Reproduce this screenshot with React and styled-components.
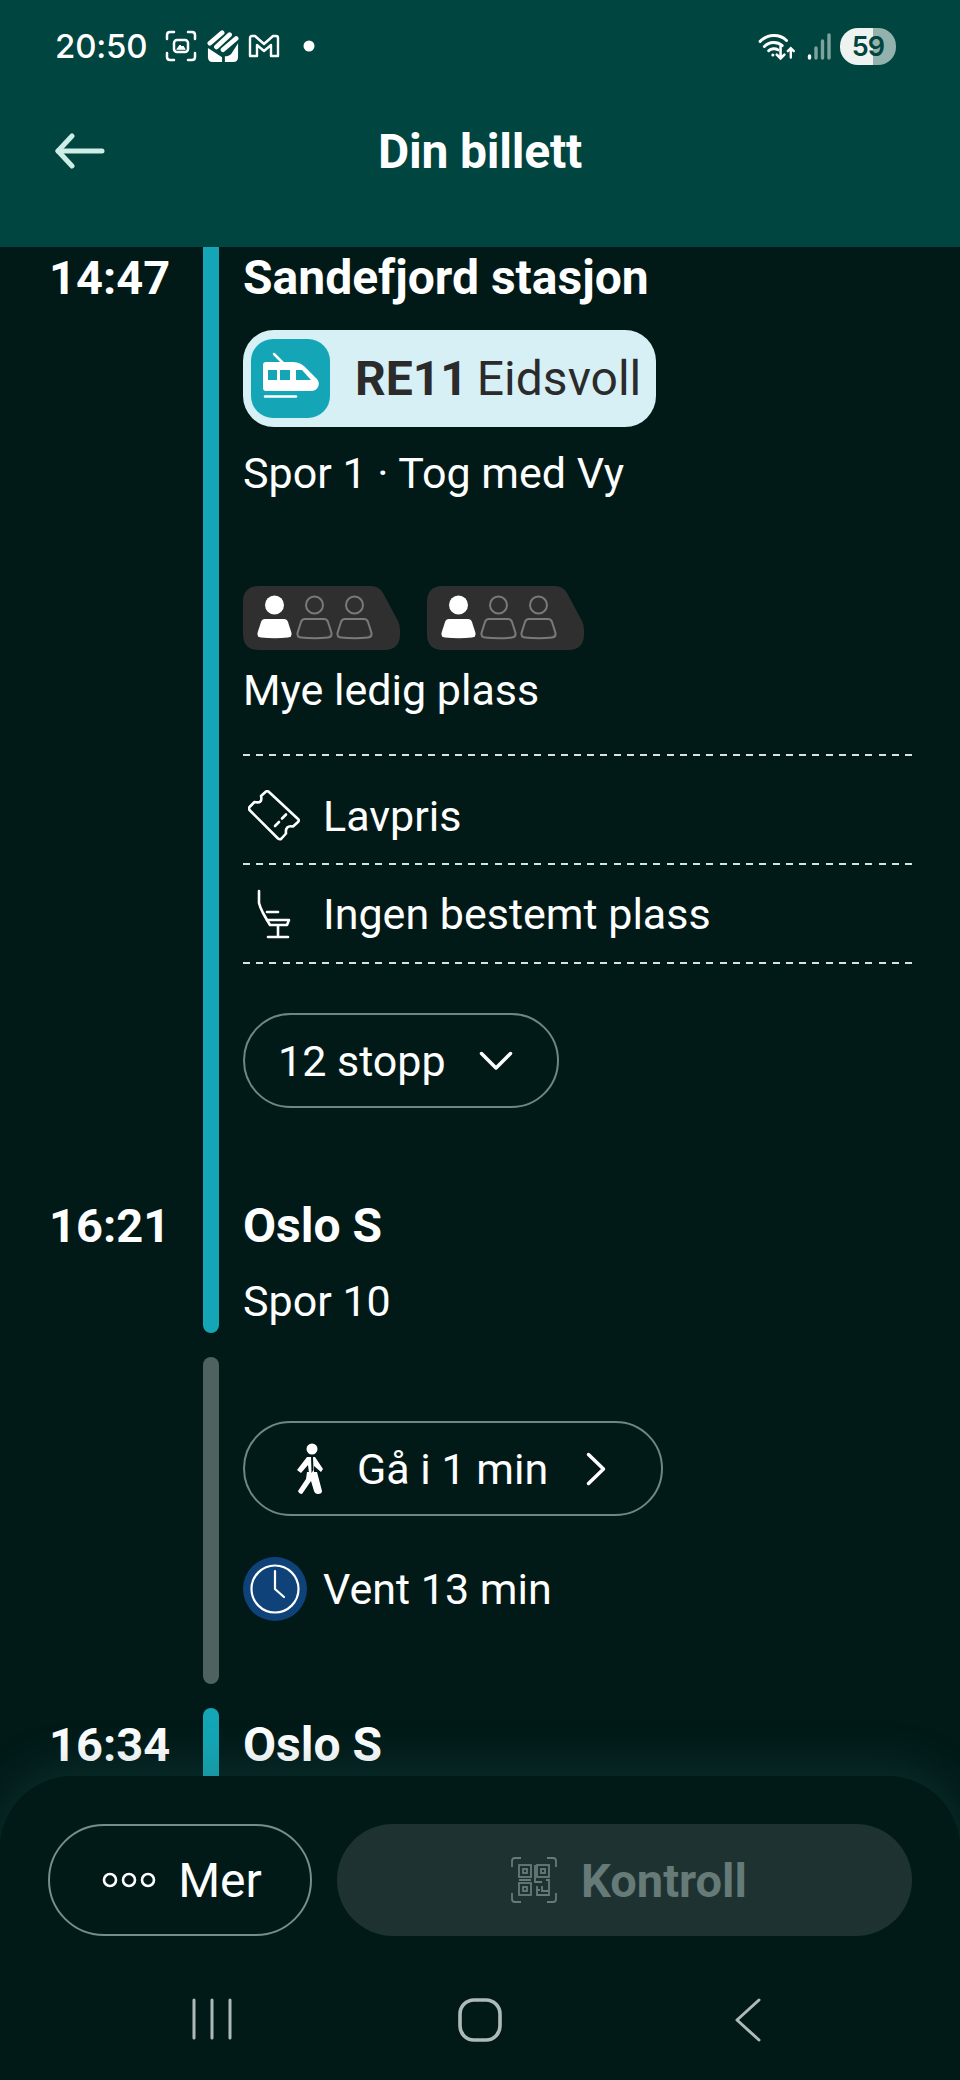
import React from "react";
import styled, { createGlobalStyle } from "styled-components";

const Global = createGlobalStyle`
  html, body { margin: 0; padding: 0; background: #011a18; }
  * { box-sizing: border-box; }
`;

const Screen = styled.div`
  position: relative;
  width: 960px;
  height: 2080px;
  overflow: hidden;
  display: flex;
  flex-direction: column;
  background: #011a18;
  color: #fff;
  font-family: Roboto, "Liberation Sans", sans-serif;
`;

const Header = styled.header`
  flex: none;
  height: 247px;
  background: #00453f;
  padding: 0 55px;
  display: flex;
  flex-direction: column;
`;

const StatusBar = styled.div`
  height: 92px;
  display: flex;
  align-items: center;
  justify-content: space-between;
`;

const StatusLeft = styled.div`
  display: flex;
  align-items: center;
`;

const Clock = styled.span`
  font-family: Inter, Roboto, sans-serif;
  font-size: 33px;
  font-weight: 500;
  letter-spacing: -0.2px;
`;

const StatusIcon = styled.span`
  display: flex;
  margin-left: ${(p) => p.$left}px;
`;

const StatusRight = styled.div`
  display: flex;
  align-items: center;
  gap: 9px;
  margin-right: 9px;
`;

const Battery = styled.div`
  width: 56px;
  height: 37px;
  border-radius: 18px;
  background: linear-gradient(90deg, #eef3f2 0 59%, #93b2ad 59% 100%);
  color: #02443e;
  font-family: Inter, Roboto, sans-serif;
  font-size: 27px;
  font-weight: 600;
  letter-spacing: -1px;
  display: flex;
  align-items: center;
  justify-content: center;
`;

const TitleBar = styled.div`
  height: 118px;
  display: grid;
  grid-template-columns: 50px 1fr 50px;
  align-items: center;
`;

const Title = styled.h1`
  margin: 0;
  font-size: 48px;
  font-weight: 700;
  letter-spacing: -0.2px;
  text-align: center;
`;

const Timeline = styled.main`
  flex: 1;
  min-height: 0;
  overflow: hidden;
  padding-left: 49px;
  display: flex;
  flex-direction: column;
  gap: 24px;
`;

const Leg = styled.section`
  display: grid;
  grid-template-columns: 154px 16px 1fr;
`;

const Times = styled.div`
  display: flex;
  flex-direction: column;
  justify-content: space-between;
  padding-bottom: ${(p) => p.$bottom || 0}px;
`;

const Time = styled.div`
  font-size: 47px;
  font-weight: 700;
  line-height: 60px;
  margin-top: ${(p) => p.$top || 0}px;
`;

const Bar = styled.div`
  border-radius: ${(p) => p.$radius};
  background: ${(p) => p.$color};
`;

const Body = styled.div`
  padding-left: 24px;
  padding-right: 48px;
  display: flex;
  flex-direction: column;
`;

const Place = styled.div`
  font-size: 48px;
  font-weight: 700;
  line-height: 60px;
  margin-top: ${(p) => p.$top || 0}px;
`;

const Line = styled.div`
  font-size: 43px;
  line-height: 56px;
  margin-top: ${(p) => p.$top || 0}px;
  margin-bottom: ${(p) => p.$bottom || 0}px;
`;

const Chip = styled.div`
  align-self: flex-start;
  margin-top: 22px;
  height: 97px;
  width: 413px;
  padding-left: 8px;
  border-radius: 31px;
  background: #d7f0f5;
  color: #2b2b2c;
  display: flex;
  align-items: center;
  font-size: 48px;
`;

const ChipIcon = styled.div`
  width: 79px;
  height: 79px;
  border-radius: 22px;
  background: #14a6b6;
  margin-right: 25px;
  flex: none;
`;

const ChipCode = styled.b`
  font-weight: 700;
  margin-right: 9px;
`;

const Badges = styled.div`
  margin-top: 85px;
  display: flex;
  gap: 27px;
  height: 65px;
`;

const Dashed = styled.div`
  height: 2px;
  margin-top: ${(p) => p.$top || 0}px;
  background: repeating-linear-gradient(90deg, #d8e2e0 0 7px, transparent 7px 13.24px);
`;

const InfoRow = styled.div`
  height: ${(p) => p.$height}px;
  padding-top: ${(p) => p.$pad || 0}px;
  display: flex;
  align-items: center;
  gap: 18px;
  font-size: 43px;
`;

const InfoIcon = styled.div`
  width: 62px;
  flex: none;
  display: flex;
  justify-content: center;
`;

const Pill = styled.div`
  align-self: flex-start;
  height: 95px;
  width: ${(p) => p.$width}px;
  margin-top: ${(p) => p.$top || 0}px;
  border: 2px solid #6f8784;
  border-radius: 48px;
  display: flex;
  align-items: center;
  padding-left: ${(p) => p.$left}px;
  gap: ${(p) => p.$gap}px;
  font-size: 43px;

  svg:last-child {
    margin-left: ${(p) => p.$tail || 0}px;
  }
`;

const WaitRow = styled.div`
  margin-top: 41px;
  display: flex;
  align-items: center;
  gap: 16px;
  font-size: 43px;
`;

const Spacer = styled.div`
  height: ${(p) => p.$height}px;
`;

const Sheet = styled.footer`
  position: absolute;
  left: 0;
  right: 0;
  bottom: 0;
  height: 304px;
  background: #011a18;
  border-radius: 72px 72px 0 0;
  box-shadow: 0 -8px 46px rgba(40, 100, 94, 0.3);
  padding: 48px 48px 0;
`;

const Actions = styled.div`
  display: flex;
  gap: 25px;
  height: 112px;
`;

const MoreButton = styled.div`
  width: 264px;
  padding-left: 4px;
  border: 2px solid #778d8a;
  border-radius: 56px;
  display: flex;
  align-items: center;
  justify-content: center;
  gap: 22px;
  font-size: 48px;
`;

const ControlButton = styled.div`
  flex: 1;
  background: #1e3331;
  border-radius: 56px;
  padding-left: 8px;
  display: flex;
  align-items: center;
  justify-content: center;
  gap: 23px;
  font-size: 47px;
  font-weight: 700;
  color: #667a78;
`;

const NavBar = styled.nav`
  margin-top: 62px;
  height: 44px;
  display: grid;
  grid-template-columns: repeat(3, 268px);
  padding-left: 30px;
`;

const NavSlot = styled.div`
  display: flex;
  justify-content: center;
`;

const WifiIcon = () => (
  <svg width="40" height="29" viewBox="0 0 46 34" fill="none" stroke="#fff" strokeWidth="3.4" strokeLinecap="round">
    <path d="M2 11C11 2 25 2 33 10" />
    <path d="M7 17C13 11 22 11 28 16" />
    <path d="M12 22C15 19 20 19 23 21" />
    <circle cx="17" cy="27" r="1.8" fill="#fff" stroke="none" />
    <path d="M26 17V31M21.5 26.5L26 31L30.5 26.5" strokeWidth="3" />
    <path d="M38 30V19M34.5 22.5L38 19L41.5 22.5" strokeWidth="2.800" />
  </svg>
);

const SignalIcon = () => (
  <svg width="24" height="27" viewBox="0 0 24 27" fill="none" strokeLinecap="round" strokeWidth="3.4">
    <path d="M2.500 23V25" stroke="#fff" />
    <path d="M9 15V25M15.500 8V25M22 2V25" stroke="#7ea39e" />
  </svg>
);

const ScanIcon = () => (
  <svg width="32" height="32" viewBox="0 0 32 32" fill="none" stroke="#fff" strokeWidth="2.500" strokeLinecap="round">
    <path d="M9 2H5Q2 2 2 5V9M23 2H27Q30 2 30 5V9M2 23V27Q2 30 5 30H9M30 23V27Q30 30 27 30H23" />
    <rect x="9" y="10" width="14" height="12" rx="3" />
    <path d="M12 19L15 15L17 17L18 16L20 19Z" fill="#fff" strokeWidth="1" />
  </svg>
);

const WalletIcon = () => (
  <svg width="32" height="32" viewBox="0 0 34 34" fill="#fff">
    <path d="M3 14L16 3M10 18L24 5M17 21L31 9" stroke="#fff" strokeWidth="5" strokeLinecap="round" />
    <path d="M1 19L16 29V34H6Q1 34 1 29Z" />
    <path d="M33 14V29Q33 34 28 34H19V28Q24 28 26 25Z" />
  </svg>
);

const MailIcon = () => (
  <svg width="32" height="24" viewBox="0 0 32 24" fill="none" stroke="#fff" strokeWidth="2.400" strokeLinejoin="round">
    <path d="M2 4Q2 2 4 2H7L16 10L25 2H28Q30 2 30 4V22H23V11L16 17L9 11V22H2Z" />
  </svg>
);

const BackArrow = () => (
  <svg width="50" height="36" viewBox="0 0 50 36" fill="none" stroke="#cdeee6" strokeWidth="5" strokeLinecap="round" strokeLinejoin="round">
    <path d="M17 3L3 18L17 33" />
    <path d="M3 18H47" />
  </svg>
);

const TrainIcon = () => (
  <svg width="79" height="79" viewBox="0 0 79 79" fill="none">
    <path d="M23 15L32 24" stroke="#fff" strokeWidth="2.500" strokeLinecap="round" />
    <path d="M15 23H42Q50 23 56 30L66 40Q69 44 67 48Q65 52 60 52H15Q12 52 12 49V26Q12 23 15 23Z" fill="#fff" />
    <rect x="17" y="31" width="9" height="10" fill="#14a6b6" />
    <rect x="29" y="31" width="10" height="10" fill="#14a6b6" />
    <path d="M45 31H51L60 41H45Z" fill="#14a6b6" />
    <path d="M14 57.500H45" stroke="#fff" strokeWidth="2.500" strokeLinecap="round" />
  </svg>
);

const Person = ({ x, filled }) => (
  <g
    transform={`translate(${x} 0)`}
    fill={filled ? "#fff" : "none"}
    stroke={filled ? "none" : "#7a7a7a"}
    strokeWidth="2"
  >
    <circle cx="17.500" cy="19" r={filled ? 9.500 : 8.500} />
    <path d="M8 33H27Q30 33 31 36L34.500 47Q35 51 31 51.500Q18 53 4 51.500Q0 51 0.500 47L4 36Q5 33 8 33Z" />
  </g>
);

const CapacityBadge = () => (
  <svg width="157" height="65" viewBox="0 0 157 65">
    <path
      d="M16 0H128Q136 0 140 7L155 35Q157 39 157 44V48Q157 64 141 64H16Q0 64 0 48V16Q0 0 16 0Z"
      fill="#2f2f30"
    />
    <Person x={14} filled />
    <Person x={54} />
    <Person x={94} />
  </svg>
);

const TicketIcon = () => (
  <svg width="52" height="51" viewBox="0 0 52 51" fill="none" stroke="#fff" strokeWidth="2.600" strokeLinejoin="round">
    <path d="M18 1.500Q19.500 0.500 21 2L50 29Q51.500 30.500 50 32L45 36.500Q37 35 38 43.500L33.500 48.500Q32 50 30 48.500L1.500 20Q0.500 18.500 1.500 17L6.500 12Q15 14 13 6Z" />
    <path d="M27 36L31 32M34 28.500L38 24.500" strokeLinecap="round" />
  </svg>
);

const SeatIcon = () => (
  <svg width="34" height="50" viewBox="0 0 34 50" fill="none" stroke="#fff" strokeWidth="2.600" strokeLinecap="round" strokeLinejoin="round">
    <path d="M2 2V14Q3 18 6 24L10 31" />
    <path d="M10 23H21" />
    <path d="M10 31H32L30 36H13Z" />
    <path d="M21 37V47M11 48H31" />
  </svg>
);

const ChevronDown = () => (
  <svg width="34" height="20" viewBox="0 0 34 20" fill="none" stroke="#fff" strokeWidth="3.500" strokeLinecap="round" strokeLinejoin="round">
    <path d="M2.500 2.500L17 17L31.500 2.500" />
  </svg>
);

const ChevronRight = () => (
  <svg width="20" height="34" viewBox="0 0 20 34" fill="none" stroke="#fff" strokeWidth="3.500" strokeLinecap="round" strokeLinejoin="round">
    <path d="M2.500 2.500L17.500 17L2.500 31.500" />
  </svg>
);

const WalkIcon = () => (
  <svg width="28" height="52" viewBox="0 0 28 52" fill="#fff">
    <circle cx="16" cy="6" r="5.500" />
    <path d="M11 14H19L27 26L25 29L18 23V30H13L12 22L5 30L1 27Z" />
    <path d="M11 29H21L26 48Q26 51 22 51Q19 51 18 48L15 38L6 51Q3 51 2 48L10 36Z" />
    <path d="M15 14H17L17.500 27L15.500 30Z" fill="#011a18" />
  </svg>
);

const ClockIcon = () => (
  <svg width="64" height="64" viewBox="0 0 64 64" fill="none">
    <circle cx="32" cy="32" r="32" fill="#0e4279" />
    <circle cx="32" cy="32" r="23.500" stroke="#fff" strokeWidth="2.200" />
    <path d="M32 14V32L41 40" stroke="#fff" strokeWidth="2.200" strokeLinecap="round" />
  </svg>
);

const DotsIcon = () => (
  <svg width="54" height="24" viewBox="0 0 54 24" fill="none" stroke="#fff" strokeWidth="2.600">
    <circle cx="8" cy="12" r="6" />
    <circle cx="27" cy="12" r="6" />
    <circle cx="46" cy="12" r="6" />
  </svg>
);

const QrIcon = () => (
  <svg width="48" height="48" viewBox="0 0 48 48" fill="none" stroke="#667a78" strokeWidth="1.800">
    <path d="M11 2H5Q2 2 2 5V11M37 2H43Q46 2 46 5V11M2 37V43Q2 46 5 46H11M46 37V43Q46 46 43 46H37" />
    <rect x="9" y="9" width="12" height="12" />
    <rect x="13" y="13" width="4" height="4" />
    <rect x="27" y="9" width="12" height="12" />
    <rect x="31" y="13" width="4" height="4" />
    <rect x="9" y="27" width="12" height="12" />
    <rect x="13" y="31" width="4" height="4" />
    <path d="M9 24H21M25 9V26H32M36 24H39V39H27V30M32 30V35H39M27 34H30" />
  </svg>
);

const NavLines = () => (
  <svg width="40" height="42" viewBox="0 0 40 42" fill="none" stroke="#aebab8" strokeWidth="3" strokeLinecap="round">
    <path d="M2 2V40M20 2V40M38 2V40" />
  </svg>
);

const NavHome = () => (
  <svg width="44" height="44" viewBox="0 0 44 44" fill="none" stroke="#aebab8" strokeWidth="3.600">
    <rect x="2" y="2" width="40" height="40" rx="14" />
  </svg>
);

const NavBack = () => (
  <svg width="26" height="44" viewBox="0 0 26 44" fill="none" stroke="#aebab8" strokeWidth="3" strokeLinecap="round" strokeLinejoin="round">
    <path d="M24 2L2 22L24 42" />
  </svg>
);

export default function App() {
  return (
    <Screen>
      <Global />
      <Header>
        <StatusBar>
          <StatusLeft>
            <Clock>20:50</Clock>
            <StatusIcon $left={18}>
              <ScanIcon />
            </StatusIcon>
            <StatusIcon $left={10}>
              <WalletIcon />
            </StatusIcon>
            <StatusIcon $left={9}>
              <MailIcon />
            </StatusIcon>
            <StatusIcon $left={23}>
              <svg width="12" height="12" viewBox="0 0 12 12">
                <circle cx="6" cy="6" r="5.500" fill="#fff" />
              </svg>
            </StatusIcon>
          </StatusLeft>
          <StatusRight>
            <WifiIcon />
            <SignalIcon />
            <Battery>59</Battery>
          </StatusRight>
        </StatusBar>
        <TitleBar>
          <BackArrow />
          <Title>Din billett</Title>
        </TitleBar>
      </Header>
      <Timeline>
        <Leg>
          <Times $bottom={77}>
            <Time $top={1}>14:47</Time>
            <Time>16:21</Time>
          </Times>
          <Bar $color="#14a6b6" $radius="0 0 8px 8px" />
          <Body>
            <Place $top={1}>Sandefjord stasjon</Place>
            <Chip>
              <ChipIcon>
                <TrainIcon />
              </ChipIcon>
              <ChipCode>RE11</ChipCode>
              Eidsvoll
            </Chip>
            <Line $top={18}>Spor 1 · Tog med Vy</Line>
            <Badges>
              <CapacityBadge />
              <CapacityBadge />
            </Badges>
            <Line $top={11}>Mye ledig plass</Line>
            <Dashed $top={36} />
            <InfoRow $height={107} $pad={12}>
              <InfoIcon>
                <TicketIcon />
              </InfoIcon>
              Lavpris
            </InfoRow>
            <Dashed />
            <InfoRow $height={97}>
              <InfoIcon>
                <SeatIcon />
              </InfoIcon>
              Ingen bestemt plass
            </InfoRow>
            <Dashed />
            <Pill $width={316} $left={33} $gap={33} $top={49}>
              12 stopp
              <ChevronDown />
            </Pill>
            <Place $top={88}>Oslo S</Place>
            <Line $top={17} $bottom={4}>Spor 10</Line>
          </Body>
        </Leg>
        <Leg>
          <span />
          <Bar $color="#4e6260" $radius="8px" />
          <Body>
            <Pill $width={420} $left={51} $gap={33} $tail={5} $top={64}>
              <WalkIcon />
              <span>Gå i 1 min</span>
              <ChevronRight />
            </Pill>
            <WaitRow>
              <ClockIcon />
              Vent 13 min
            </WaitRow>
            <Spacer $height={63} />
          </Body>
        </Leg>
        <Leg>
          <Time $top={7}>16:34</Time>
          <Bar $color="#14a6b6" $radius="8px 8px 0 0" />
          <Body>
            <Place $top={7}>Oslo S</Place>
            <Spacer $height={300} />
          </Body>
        </Leg>
      </Timeline>
      <Sheet>
        <Actions>
          <MoreButton>
            <DotsIcon />
            Mer
          </MoreButton>
          <ControlButton>
            <QrIcon />
            Kontroll
          </ControlButton>
        </Actions>
        <NavBar>
          <NavSlot>
            <NavLines />
          </NavSlot>
          <NavSlot>
            <NavHome />
          </NavSlot>
          <NavSlot>
            <NavBack />
          </NavSlot>
        </NavBar>
      </Sheet>
    </Screen>
  );
}
